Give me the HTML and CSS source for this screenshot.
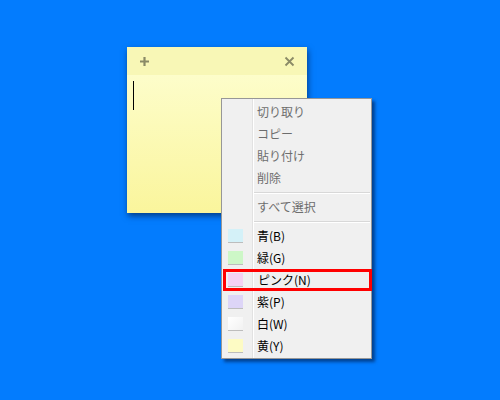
FILE: index.html
```html
<!DOCTYPE html>
<html lang="ja">
<head>
<meta charset="utf-8">
<link rel="stylesheet" href="styles.css">
</head>
<body>
<div class="desktop">
  <div class="note">
    <div class="note-head">
      <svg class="ico" width="11" height="11" viewBox="0 0 11 11"><path d="M5.5 1v9M1 5.5h9" stroke="#8a8a66" stroke-width="2.2"/></svg>
      <svg class="ico" width="11" height="11" viewBox="0 0 11 11"><path d="M1.5 1.5l8 8M9.5 1.5l-8 8" stroke="#8a8a66" stroke-width="1.8"/></svg>
    </div>
    <div class="note-body"><span class="caret"></span></div>
  </div>
  <div class="menu">
    <div class="item disabled"><span class="gut"></span><span class="label">切り取り</span></div>
    <div class="item disabled"><span class="gut"></span><span class="label">コピー</span></div>
    <div class="item disabled"><span class="gut"></span><span class="label">貼り付け</span></div>
    <div class="item disabled"><span class="gut"></span><span class="label">削除</span></div>
    <div class="sep"></div>
    <div class="item disabled"><span class="gut"></span><span class="label">すべて選択</span></div>
    <div class="sep"></div>
    <div class="item"><span class="gut"><span class="sw blue"></span></span><span class="label">青(B)</span></div>
    <div class="item"><span class="gut"><span class="sw green"></span></span><span class="label">緑(G)</span></div>
    <div class="item hl"><span class="gut"><span class="sw pink"></span></span><span class="label">ピンク(N)</span></div>
    <div class="item"><span class="gut"><span class="sw purple"></span></span><span class="label">紫(P)</span></div>
    <div class="item"><span class="gut"><span class="sw white"></span></span><span class="label">白(W)</span></div>
    <div class="item"><span class="gut"><span class="sw yellow"></span></span><span class="label">黄(Y)</span></div>
  </div>
</div>
</body>
</html>
```
FILE: styles.css
```css
html, body {
  margin: 0;
  padding: 0;
}
body {
  width: 500px;
  height: 400px;
  background: #037cfe;
  font-family: "Noto Sans CJK JP", "Noto Sans", sans-serif;
  overflow: hidden;
}
.desktop {
  position: relative;
  width: 500px;
  height: 400px;
}
.note {
  position: absolute;
  left: 127px;
  top: 47px;
  width: 180px;
  height: 166px;
  display: flex;
  flex-direction: column;
  box-shadow: 1px 3px 6px rgba(0, 20, 60, 0.6);
}
.note-head {
  height: 28px;
  background: #f8f7b6;
  display: flex;
  align-items: center;
  justify-content: space-between;
  padding: 0 12px 0 12px;
}
.ico {
  display: block;
}
.note-body {
  flex: 1;
  background: linear-gradient(#fdfdca, #faf59c);
  padding: 6px 0 0 6px;
}
.caret {
  display: block;
  width: 1px;
  height: 29px;
  background: #000;
}
.menu {
  position: absolute;
  left: 221px;
  top: 98px;
  width: 149px;
  padding: 2px 0 1px 0;
  background: #f0f0f0;
  border: 1px solid #979797;
  box-shadow: 3px 3px 3px rgba(0, 20, 60, 0.55);
  background-image: linear-gradient(90deg, transparent 30px, #e2e2e2 30px, #e2e2e2 31px, #ffffff 31px, #ffffff 32px, transparent 32px);
}
.item {
  height: 22px;
  display: flex;
  align-items: center;
  font-size: 12px;
  color: #000;
  box-sizing: border-box;
}
.item.disabled {
  color: #6d6d6d;
}
.gut {
  width: 35px;
  box-sizing: border-box;
  display: flex;
  justify-content: flex-start;
  padding-left: 6px;
}
.label {
  line-height: 22px;
}
.sep {
  height: 7px;
  margin-left: 32px;
  margin-right: 1px;
  background: linear-gradient(transparent 3px, #d8d8d8 3px, #d8d8d8 4px, #fff 4px, #fff 5px, transparent 5px);
}
.item.hl {
  outline: 3px solid #ff0000;
  outline-offset: -3px;
  margin: 0 -1px 0 1px;
}
.item.hl .gut {
  padding-left: 5px;
}
.sw {
  display: block;
  width: 15px;
  height: 13px;
  border-bottom: 1px solid #bdbdbd;
}
.blue { background: #d4f1f8; }
.green { background: #cdf7c7; }
.pink { background: #f5d1f3; }
.purple { background: #ddd5f7; }
.white { background: linear-gradient(135deg, #ffffff, #f1f1f1); }
.yellow { background: #fdfbc4; }
```
